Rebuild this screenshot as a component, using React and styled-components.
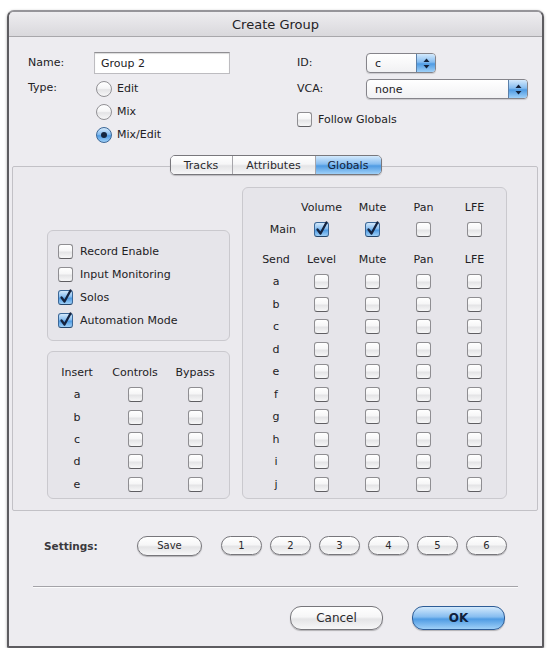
import React from "react";
import styled, { createGlobalStyle } from "styled-components";

const GlobalStyle = createGlobalStyle`
    html, body {
        margin: 0;
        padding: 0;
        background: #ffffff;
    }

    body {
        font-family: "DejaVu Sans", "Liberation Sans", sans-serif;
        font-size: 11px;
        color: #222124;
    }
`;

/** Aqua gradients shared by the controls */
const aqua = {
    white: "linear-gradient(#ffffff, #f6f6f7 45%, #e4e4e6 55%, #f7f7f8)",
    blue: "linear-gradient(#d3e9fc, #86bdf0 45%, #4f9be3 55%, #9fd0f8)",
};

const Window = styled.div`
    box-sizing: border-box;
    width: 537px;
    height: 638px;
    margin: 10px 0 0 7px;
    border: 2px solid #5d5c60;
    border-top-color: #96959a;
    border-radius: 7px 7px 2px 2px;
    background: #edecf0;
    display: flex;
    flex-direction: column;
    overflow: hidden;
    box-shadow: 0 1px 3px rgba(0, 0, 0, 0.35);
`;

const TitleBar = styled.div`
    box-sizing: border-box;
    height: 25px;
    flex: none;
    display: flex;
    align-items: center;
    justify-content: center;
    font-size: 13px;
    color: #232226;
    background: linear-gradient(#eeedf0, #d9d8dc);
    border-bottom: 1px solid #a8a7ab;
`;

const TopForm = styled.div`
    display: flex;
    padding: 15px 0 0 19px;
`;

const FieldColumn = styled.div`
    width: ${(props) => props.$width}px;
    display: flex;
    flex-direction: column;
`;

const FieldRow = styled.div`
    display: flex;
    align-items: ${(props) => (props.$top ? "flex-start" : "center")};
    min-height: 22px;
    margin-top: ${(props) => props.$gap || 0}px;
`;

const FieldLabel = styled.span`
    width: ${(props) => props.$width}px;
    flex: none;
    line-height: 22px;
`;

const TextInput = styled.div`
    box-sizing: border-box;
    width: 136px;
    height: 22px;
    padding-left: 6px;
    display: flex;
    align-items: center;
    background: #ffffff;
    border: 1px solid #bdbcc0;
    border-top-color: #8f8e92;
    box-shadow: inset 0 1px 1px rgba(0, 0, 0, 0.15);
`;

const RadioList = styled.div`
    display: flex;
    flex-direction: column;
`;

const Choice = styled.label`
    display: flex;
    align-items: center;
    gap: ${(props) => props.$gap || 5}px;
    height: ${(props) => props.$height || 23}px;
`;

const RadioDot = styled.span`
    box-sizing: border-box;
    width: 16px;
    height: 16px;
    margin-left: 2px;
    border-radius: 50%;
    border: 1px solid ${(props) => (props.$on ? "#3b6797" : "#929195")};
    background: ${(props) => (props.$on ? aqua.blue : aqua.white)};
    display: flex;
    align-items: center;
    justify-content: center;

    &::after {
        content: "";
        display: ${(props) => (props.$on ? "block" : "none")};
        width: 6px;
        height: 6px;
        border-radius: 50%;
        background: #142640;
    }
`;

const Box = styled.span`
    box-sizing: border-box;
    flex: none;
    width: 15px;
    height: 15px;
    border-radius: 3px;
    border: 1px solid ${(props) => (props.$on ? "#3b6797" : "#8f8e92")};
    border-bottom-color: ${(props) => (props.$on ? "#24456b" : "#5f5e62")};
    background: ${(props) => (props.$on ? aqua.blue : aqua.white)};
    display: inline-flex;
    align-items: center;
    justify-content: center;

    svg {
        overflow: visible;
    }
`;

const Check = ({ on }) => (
    <Box $on={on}>
        {on && (
            <svg width="13" height="13" viewBox="0 0 13 13">
                <path
                    d="M2.5 6.5 L5.5 10.5 L11.5 -0.5"
                    fill="none"
                    stroke="#15233f"
                    strokeWidth="2.3"
                    strokeLinecap="round"
                    strokeLinejoin="round"
                />
            </svg>
        )}
    </Box>
);

const Popup = styled.div`
    box-sizing: border-box;
    width: ${(props) => props.$width}px;
    height: 20px;
    display: flex;
    align-items: stretch;
    border: 1px solid #85848a;
    border-radius: 4px;
    background: linear-gradient(#ffffff, #f1f1f3);
    box-shadow: 0 1px 1px rgba(0, 0, 0, 0.15);
    overflow: hidden;
`;

const PopupValue = styled.span`
    flex: 1;
    display: flex;
    align-items: center;
    padding-left: 8px;
`;

const PopupArrows = styled.span`
    width: 18px;
    display: flex;
    align-items: center;
    justify-content: center;
    background: ${aqua.blue};
    border-left: 1px solid #5b7fa8;
`;

const Arrows = () => (
    <svg width="7" height="11" viewBox="0 0 7 11">
        <path d="M3.5 0.5 L6.5 4 L0.5 4 Z" fill="#14223a" />
        <path d="M3.5 10.5 L6.5 7 L0.5 7 Z" fill="#14223a" />
    </svg>
);

const TabStrip = styled.div`
    box-sizing: border-box;
    align-self: center;
    position: relative;
    z-index: 1;
    display: flex;
    height: 20px;
    margin-top: 9px;
    border: 1px solid #78777c;
    border-radius: 5px;
    overflow: hidden;
    box-shadow: 0 1px 1px rgba(0, 0, 0, 0.2);
`;

const Tab = styled.div`
    box-sizing: border-box;
    width: ${(props) => props.$width}px;
    display: flex;
    align-items: center;
    justify-content: center;
    background: ${(props) => (props.$active ? aqua.blue : aqua.white)};
    color: ${(props) => (props.$active ? "#14223a" : "#2a292d")};

    & + & {
        border-left: 1px solid #a6a5aa;
    }
`;

const TabPanel = styled.div`
    margin: -9px 4px 0 3px;
    padding: 20px 30px 11px 34px;
    display: flex;
    align-items: flex-end;
    gap: 12px;
    border: 1px solid #c2c1c6;
    border-radius: 2px;
    background: #ebeaee;
`;

const LeftStack = styled.div`
    display: flex;
    flex-direction: column;
    gap: 10px;
`;

const GroupBox = styled.div`
    box-sizing: border-box;
    width: ${(props) => props.$width}px;
    padding: ${(props) => props.$pad};
    border: 1px solid #cac9ce;
    border-radius: 6px;
    background: #e6e5ea;
`;

const Matrix = styled.div`
    display: grid;
    grid-template-columns: ${(props) => props.$cols};
    grid-auto-rows: ${(props) => props.$row}px;
    justify-items: center;
    align-items: center;
    margin-top: ${(props) => props.$gap || 0}px;
`;

const RowLabel = styled.span`
    justify-self: ${(props) => props.$align || "center"};
`;

const SettingsRow = styled.div`
    display: flex;
    align-items: center;
    height: 20px;
    margin-top: 25px;
    padding-left: 35px;
`;

const SettingsLabel = styled.span`
    width: 93px;
    font-weight: bold;
    font-size: 10.5px;
    color: #3a393d;
`;

const PillButton = styled.div`
    box-sizing: border-box;
    width: ${(props) => props.$width}px;
    height: ${(props) => props.$height || 19}px;
    margin-right: ${(props) => props.$after || 8}px;
    display: flex;
    align-items: center;
    justify-content: center;
    font-size: ${(props) => props.$size || 10}px;
    color: ${(props) => (props.$primary ? "#10203c" : "#2a292d")};
    font-weight: ${(props) => (props.$primary ? "bold" : "normal")};
    border: 1px solid ${(props) => (props.$primary ? "#2d5c96" : "#77767b")};
    border-radius: 11px;
    background: ${(props) => (props.$primary ? aqua.blue : aqua.white)};
    box-shadow: 0 1px 1px rgba(0, 0, 0, 0.25);
`;

const Divider = styled.div`
    height: 1px;
    margin: 30px 24px 0;
    background: #a4a3a8;
    border-bottom: 1px solid #fbfbfc;
`;

const ButtonRow = styled.div`
    display: flex;
    justify-content: flex-end;
    gap: 21px;
    margin-top: 18px;
    padding-right: 29px;
`;

const insertRows = ["a", "b", "c", "d", "e"];
const sendRows = ["a", "b", "c", "d", "e", "f", "g", "h", "i", "j"];
const presets = ["1", "2", "3", "4", "5", "6"];

const globals = [
    { label: "Record Enable", on: false },
    { label: "Input Monitoring", on: false },
    { label: "Solos", on: true },
    { label: "Automation Mode", on: true },
];

const sendCols = "40px repeat(4, 51px)";

export default function App() {
    return (
        <>
            <GlobalStyle />
            <Window>
                <TitleBar>Create Group</TitleBar>

                <TopForm>
                    <FieldColumn $width={269}>
                        <FieldRow>
                            <FieldLabel $width={66}>Name:</FieldLabel>
                            <TextInput>Group 2</TextInput>
                        </FieldRow>
                        <FieldRow $top $gap={3}>
                            <FieldLabel $width={66}>Type:</FieldLabel>
                            <RadioList>
                                <Choice><RadioDot />Edit</Choice>
                                <Choice><RadioDot />Mix</Choice>
                                <Choice><RadioDot $on />Mix/Edit</Choice>
                            </RadioList>
                        </FieldRow>
                    </FieldColumn>

                    <FieldColumn $width={240}>
                        <FieldRow>
                            <FieldLabel $width={69}>ID:</FieldLabel>
                            <Popup $width={70}>
                                <PopupValue>c</PopupValue>
                                <PopupArrows><Arrows /></PopupArrows>
                            </Popup>
                        </FieldRow>
                        <FieldRow $gap={4}>
                            <FieldLabel $width={69}>VCA:</FieldLabel>
                            <Popup $width={162}>
                                <PopupValue>none</PopupValue>
                                <PopupArrows><Arrows /></PopupArrows>
                            </Popup>
                        </FieldRow>
                        <FieldRow $gap={8}>
                            <Choice $gap={6} $height={22}>
                                <Check />Follow Globals
                            </Choice>
                        </FieldRow>
                    </FieldColumn>
                </TopForm>

                <TabStrip>
                    <Tab $width={61}>Tracks</Tab>
                    <Tab $width={83}>Attributes</Tab>
                    <Tab $width={66} $active>Globals</Tab>
                </TabStrip>

                <TabPanel>
                    <LeftStack>
                        <GroupBox $width={183} $pad="9px 0 8px 10px">
                            {globals.map((item) => (
                                <Choice key={item.label} $gap={7}>
                                    <Check on={item.on} />
                                    {item.label}
                                </Choice>
                            ))}
                        </GroupBox>

                        <GroupBox $width={183} $pad="9px 0 2px 9px">
                            <Matrix $cols="40px 76px 44px" $row={22.4}>
                                <RowLabel>Insert</RowLabel>
                                <RowLabel>Controls</RowLabel>
                                <RowLabel>Bypass</RowLabel>
                                {insertRows.map((row) => (
                                    <React.Fragment key={row}>
                                        <RowLabel>{row}</RowLabel>
                                        <Check />
                                        <Check />
                                    </React.Fragment>
                                ))}
                            </Matrix>
                        </GroupBox>
                    </LeftStack>

                    <GroupBox $width={265} $pad="8px 0 2px 13px">
                        <Matrix $cols={sendCols} $row={22}>
                            <span />
                            <RowLabel>Volume</RowLabel>
                            <RowLabel>Mute</RowLabel>
                            <RowLabel>Pan</RowLabel>
                            <RowLabel>LFE</RowLabel>
                            <RowLabel $align="end">Main</RowLabel>
                            <Check on />
                            <Check on />
                            <Check />
                            <Check />
                        </Matrix>
                        <Matrix $cols={sendCols} $row={22.5} $gap={8}>
                            <RowLabel>Send</RowLabel>
                            <RowLabel>Level</RowLabel>
                            <RowLabel>Mute</RowLabel>
                            <RowLabel>Pan</RowLabel>
                            <RowLabel>LFE</RowLabel>
                            {sendRows.map((row) => (
                                <React.Fragment key={row}>
                                    <RowLabel>{row}</RowLabel>
                                    <Check />
                                    <Check />
                                    <Check />
                                    <Check />
                                </React.Fragment>
                            ))}
                        </Matrix>
                    </GroupBox>
                </TabPanel>

                <SettingsRow>
                    <SettingsLabel>Settings:</SettingsLabel>
                    <PillButton $width={65} $height={20} $after={19}>Save</PillButton>
                    {presets.map((num) => (
                        <PillButton key={num} $width={41}>{num}</PillButton>
                    ))}
                </SettingsRow>

                <Divider />

                <ButtonRow>
                    <PillButton $width={93} $height={24} $after={0} $size={12}>
                        Cancel
                    </PillButton>
                    <PillButton $width={93} $height={24} $after={0} $size={12} $primary>
                        OK
                    </PillButton>
                </ButtonRow>
            </Window>
        </>
    );
}
